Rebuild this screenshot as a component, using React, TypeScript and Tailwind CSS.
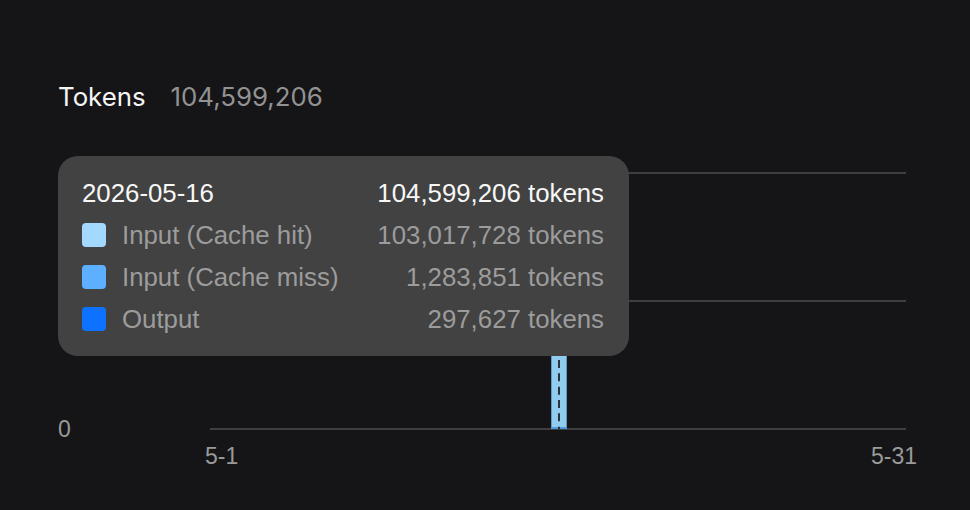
const rows = [
  { label: "Input (Cache hit)", value: "103,017,728 tokens", swatch: "bg-[#a3d9ff]" },
  { label: "Input (Cache miss)", value: "1,283,851 tokens", swatch: "bg-[#5cb0ff]" },
  { label: "Output", value: "297,627 tokens", swatch: "bg-[#0d72ff]" },
];

export default function App() {
  return (
    <div className="h-[510px] w-[970px] overflow-hidden bg-[#151517] pl-[59px] pt-[81px] font-['Inter',sans-serif] leading-[32px]">
      <div className="-ml-[1px] flex gap-[25px] text-[25.8px]">
        <span className="text-[#f5f5f5]">Tokens</span>
        <span className="text-[#929292]">104,599,206</span>
      </div>

      {/* chart */}
      <div className="relative mt-[59px] h-[258px] w-[847px] pl-[151px] text-[24px]">
        <div className="flex h-full flex-col justify-between">
          <div className="h-[2px] bg-[#3f3f41]" />
          <div className="h-[2px] bg-[#3f3f41]" />
          <div className="h-[2px] bg-[#3f3f41]" />
        </div>

        <div className="absolute left-[492px] top-[100px] h-[157px] w-[16px] border-x border-[#6499bf] bg-[#90cbf0]">
          <div className="absolute bottom-0 left-0 h-[2px] w-full bg-[#4c9be0]" />
          <svg className="absolute left-[6px] top-0" width="2" height="157">
            <line x1="1" y1="0" x2="1" y2="157" stroke="#2b3238" strokeWidth="2" strokeDasharray="8 5.33" strokeDashoffset="-8" />
          </svg>
        </div>

        <span className="absolute left-[-1px] top-[243px] font-['Liberation_Sans',sans-serif] text-[23px] leading-[28px] text-[#9a9a9a]">0</span>
        <span className="absolute left-[146px] top-[270px] whitespace-nowrap font-['Liberation_Sans',sans-serif] text-[23px] leading-[28px] text-[#9a9a9a]">5-1</span>
        <span className="absolute right-[-11px] top-[270px] whitespace-nowrap font-['Liberation_Sans',sans-serif] text-[23px] leading-[28px] text-[#9a9a9a]">5-31</span>

        {/* tooltip */}
        <div className="absolute left-[-1px] top-[-16px] flex h-[200px] w-[571px] flex-col justify-center rounded-[20px] bg-[#424242] pl-[24px] pr-[25px] font-['Liberation_Sans',sans-serif] text-[25.8px]">
          <div className="flex h-[42px] items-center justify-between text-[#f7f7f7]">
            <span>2026-05-16</span>
            <span>104,599,206 tokens</span>
          </div>
          {rows.map((row) => (
            <div key={row.label} className="flex h-[42px] items-center justify-between text-[#9c9c9c]">
              <div className="flex items-center gap-[16px]">
                <span className={`h-[24px] w-[24px] rounded-[4px] ${row.swatch}`} />
                <span>{row.label}</span>
              </div>
              <span>{row.value}</span>
            </div>
          ))}
        </div>
      </div>
    </div>
  );
}
